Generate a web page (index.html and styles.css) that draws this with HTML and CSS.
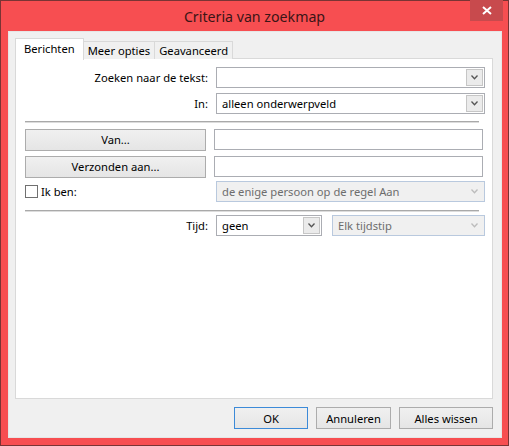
FILE: index.html
```html
<!DOCTYPE html>
<html lang="nl">
<head>
  <meta charset="UTF-8" />
  <title>Criteria van zoekmap</title>
  <link rel="stylesheet" href="styles.css">
</head>
<body>
  <div class="window">
    <div class="titlebar">
      <span></span>
      <span class="title">Criteria van zoekmap</span>
      <button class="close-btn" title="Sluiten">
        <svg width="10" height="9" viewBox="0 0 10 9"><path d="M1 1 L9 8 M9 1 L1 8" stroke="#fff" stroke-width="2" fill="none"/></svg>
      </button>
    </div>

    <div class="client">
      <div class="tabs">
        <div class="tab active">Berichten</div>
        <div class="tab">Meer opties</div>
        <div class="tab">Geavanceerd</div>
      </div>

      <div class="panel">
        <div class="row row-first">
          <label class="label">Zoeken naar de tekst:</label>
          <div class="combo">
            <span class="combo-text"></span>
            <span class="drop"><svg width="7" height="5" viewBox="0 0 7 5"><path d="M0.5 0.5 L3.5 3.8 L6.5 0.5" stroke="#555" stroke-width="1.3" fill="none"/></svg></span>
          </div>
        </div>

        <div class="row row-in">
          <label class="label">In:</label>
          <div class="combo">
            <span class="combo-text">alleen onderwerpveld</span>
            <span class="drop"><svg width="7" height="5" viewBox="0 0 7 5"><path d="M0.5 0.5 L3.5 3.8 L6.5 0.5" stroke="#555" stroke-width="1.3" fill="none"/></svg></span>
          </div>
        </div>

        <div class="separator sep-1"></div>

        <div class="row row-van">
          <button class="btn wide">Van...</button>
          <input class="textbox" type="text" />
        </div>

        <div class="row row-aan">
          <button class="btn wide">Verzonden aan...</button>
          <input class="textbox" type="text" />
        </div>

        <div class="row row-ik">
          <label class="check"><span class="box"></span>Ik ben:</label>
          <div class="combo disabled">
            <span class="combo-text">de enige persoon op de regel Aan</span>
            <span class="drop"><svg width="7" height="5" viewBox="0 0 7 5"><path d="M0.5 0.5 L3.5 3.8 L6.5 0.5" stroke="#bcbcbc" stroke-width="1.3" fill="none"/></svg></span>
          </div>
        </div>

        <div class="separator sep-2"></div>

        <div class="row row-tijd">
          <label class="label">Tijd:</label>
          <div class="tijd-fields">
            <div class="combo small">
              <span class="combo-text">geen</span>
              <span class="drop"><svg width="7" height="5" viewBox="0 0 7 5"><path d="M0.5 0.5 L3.5 3.8 L6.5 0.5" stroke="#555" stroke-width="1.3" fill="none"/></svg></span>
            </div>
            <div class="combo disabled grow">
              <span class="combo-text">Elk tijdstip</span>
              <span class="drop"><svg width="7" height="5" viewBox="0 0 7 5"><path d="M0.5 0.5 L3.5 3.8 L6.5 0.5" stroke="#bcbcbc" stroke-width="1.3" fill="none"/></svg></span>
            </div>
          </div>
        </div>
      </div>

      <div class="footer">
        <button class="btn ok">OK</button>
        <button class="btn cancel">Annuleren</button>
        <button class="btn clear">Alles wissen</button>
      </div>
    </div>
  </div>
</body>
</html>
```

FILE: styles.css
```css
body {
  margin: 0;
  font-family: "Segoe UI", "Noto Sans", sans-serif;
  font-size: 11.2px;
  color: #000;
}

.window {
  width: 509px;
  height: 446px;
  box-sizing: border-box;
  border: 1px solid #7a3434;
  background-color: #f74e51;
  display: flex;
  flex-direction: column;
}

.titlebar {
  height: 30px;
  display: grid;
  grid-template-columns: 1fr auto 1fr;
  align-items: start;
}

.title {
  font-size: 14.2px;
  color: #3b1516;
  line-height: 31px;
}

.close-btn {
  justify-self: end;
  margin-top: -1px;
  margin-right: 5px;
  width: 33px;
  height: 21px;
  border: none;
  padding: 0;
  background-color: #c84a4d;
  display: flex;
  align-items: center;
  justify-content: center;
}

.client {
  flex: 1;
  margin: 0 6px 7px 7px;
  border: 1px solid #e6e6e6;
  background-color: #f0f0f0;
  padding: 6px 8px 0 6px;
  display: flex;
  flex-direction: column;
}

.tabs {
  display: flex;
  align-items: flex-end;
  height: 21px;
  margin-bottom: -1px;
  position: relative;
  z-index: 1;
}

.tab {
  height: 18px;
  line-height: 17px;
  padding: 0 4px;
  box-sizing: border-box;
  border: 1px solid #d9d9d9;
  border-bottom: none;
  background-color: #f0f0f0;
  margin-left: -1px;
}

.tab.active {
  height: 22px;
  line-height: 20px;
  margin-left: 0;
  padding: 0 8px;
  background-color: #fff;
  border-color: #d9d9d9;
  margin-bottom: -1px;
}

.panel {
  height: 341px;
  box-sizing: border-box;
  border: 1px solid #d9d9d9;
  background-color: #fff;
  padding: 0 7px 0 9px;
}

.row {
  display: flex;
  align-items: center;
  gap: 8px;
  height: 21px;
}

.row-first { margin-top: 8px; }
.row-in { margin-top: 5px; }
.row-van { margin-top: 6px; }
.row-aan { margin-top: 6px; }
.row-ik { margin-top: 4px; }
.row-tijd { margin-top: 3px; }

.label {
  width: 183px;
  text-align: right;
}

.combo {
  width: 269px;
  height: 21px;
  box-sizing: border-box;
  border: 1px solid #abadb3;
  background-color: #fff;
  display: flex;
  align-items: center;
  padding: 1px;
}

.combo-text {
  flex: 1;
  padding-left: 4px;
}

.drop {
  width: 17px;
  height: 17px;
  box-sizing: border-box;
  border: 1px solid #c6c6c6;
  background-color: #ebebeb;
  display: flex;
  align-items: center;
  justify-content: center;
}

.combo.disabled {
  background-color: #f0f0f0;
  border-color: #b9c9de;
  color: #6d6d6d;
}

.combo.disabled .drop {
  border-color: transparent;
  background-color: transparent;
}

.tijd-fields {
  display: flex;
  gap: 10px;
  width: 269px;
}

.combo.small {
  width: 106px;
}

.combo.grow {
  flex: 1;
  width: auto;
}

.separator {
  height: 0;
  border-top: 1px solid #a9a9a9;
  border-bottom: 1px solid #dcdcdc;
  margin-right: 6px;
}

.sep-1 { margin-top: 7px; }
.sep-2 { margin-top: 8px; }

.btn {
  font-family: inherit;
  font-size: 11.2px;
  color: #000;
  height: 22px;
  box-sizing: border-box;
  border: 1px solid #acacac;
  background: linear-gradient(#f0f0f0, #e5e5e5);
  padding: 0;
}

.btn.wide {
  width: 181px;
}

.textbox {
  width: 269px;
  height: 21px;
  box-sizing: border-box;
  border: 1px solid #abadb3;
  margin: 0;
}

.check {
  width: 183px;
  display: flex;
  align-items: center;
}

.box {
  width: 13px;
  height: 13px;
  box-sizing: border-box;
  border: 1px solid #707070;
  background-color: #fff;
  margin-right: 3px;
}

.footer {
  display: flex;
  justify-content: flex-end;
  gap: 8px;
  margin-top: 8px;
}

.btn.ok {
  width: 74px;
  border-color: #3c8ad8;
}

.btn.cancel {
  width: 75px;
}

.btn.clear {
  width: 94px;
}
```
